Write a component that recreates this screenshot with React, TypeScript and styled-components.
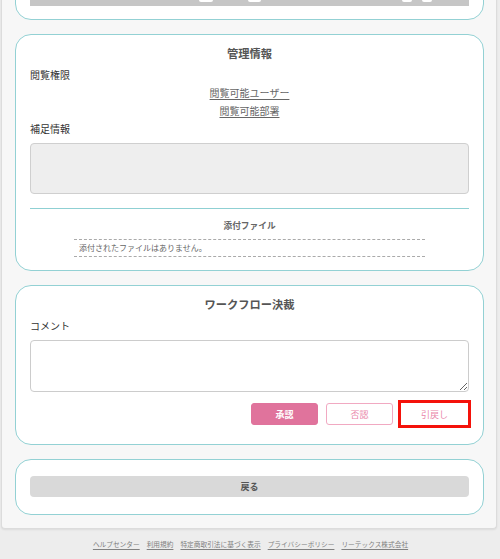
import styled, { createGlobalStyle } from "styled-components";

const GlobalStyle = createGlobalStyle`
  html, body {
    margin: 0;
    padding: 0;
    background: #ededed;
  }
  body {
    font-family: "Noto Sans CJK JP", "Noto Sans", sans-serif;
    color: #333;
  }
`;

const Page = styled.div`
  width: 500px;
  height: 559px;
  overflow: hidden;
`;

const Container = styled.div`
  margin: -39px 3px 0 1px;
  padding: 0 12px 13px 13px;
  background: #f7f7f7;
  border: 1px solid #dcdcdc;
  border-top: none;
  border-radius: 0 0 4px 4px;
  box-shadow: 0 1px 2px rgba(0, 0, 0, 0.08);
  display: flex;
  flex-direction: column;
  gap: 14px;
`;

const Card = styled.section`
  background: #fff;
  border: 1px solid #93d1d4;
  border-radius: 16px;
  padding: 8px 14px 13px;
  display: flex;
  flex-direction: column;
`;

const ToolBar = styled.div`
  box-sizing: border-box;
  height: 30px;
  margin-top: 6px;
  background: #c6c6c6;
  display: flex;
  align-items: flex-end;
  padding: 0 37px 4px 169px;
`;

const ToolKnob = styled.span<{ $w: number; $ml?: number }>`
  width: ${(p) => p.$w}px;
  height: 12px;
  margin-left: ${(p) => p.$ml ?? 0}px;
  background: #fff;
  border-radius: 2px;
`;

const Spacer = styled.span`
  flex: 1;
`;

const Title = styled.h2`
  margin: 0;
  font-size: 11.25px;
  line-height: 20px;
  font-weight: 700;
  color: #555;
  text-align: center;
`;

const Label = styled.div<{ $mt?: number }>`
  margin-top: ${(p) => p.$mt ?? 0}px;
  font-size: 10px;
  line-height: 18px;
  color: #333;
`;

const LinkLine = styled.a<{ $lh?: number }>`
  align-self: center;
  font-size: 10px;
  line-height: ${(p) => p.$lh ?? 18}px;
  color: #666;
  text-decoration: underline;
  text-underline-offset: 2px;
  cursor: pointer;
`;

const TextBox = styled.textarea<{ $readonly?: boolean }>`
  display: block;
  box-sizing: border-box;
  width: 100%;
  height: ${(p) => (p.$readonly ? 51 : 52)}px;
  margin: 5px 0 0;
  border: 1px solid ${(p) => (p.$readonly ? "#cfcfcf" : "#cccccc")};
  border-radius: 4px;
  background: ${(p) => (p.$readonly ? "#eeeeee" : "#ffffff")};
  resize: ${(p) => (p.$readonly ? "none" : "vertical")};
  font-family: inherit;
  font-size: 10px;
  outline: none;
`;

const Divider = styled.div`
  margin-top: 14px;
  height: 1px;
  background: #8fd0d3;
`;

const SubTitle = styled.h3`
  margin: 9px 0 0;
  font-size: 8.7px;
  line-height: 16px;
  font-weight: 700;
  color: #666;
  text-align: center;
`;

const FileList = styled.div`
  align-self: center;
  width: 80%;
  margin-top: 5px;
  border-top: 1px dashed #aaa;
  border-bottom: 1px dashed #aaa;
  padding: 0 5px;
  box-sizing: border-box;
  font-size: 8px;
  line-height: 16px;
  color: #666;
`;

const ButtonRow = styled.div`
  display: flex;
  justify-content: flex-end;
  gap: 8px;
  margin: 11px 1px 6px 0;
`;

const ActionButton = styled.button<{ $variant: "fill" | "line"; $marked?: boolean }>`
  width: 67px;
  height: 22px;
  box-sizing: border-box;
  border-radius: ${(p) => (p.$marked ? 0 : 3)}px;
  font-family: inherit;
  font-size: 9px;
  font-weight: ${(p) => (p.$variant === "fill" ? 700 : 400)};
  color: ${(p) => (p.$variant === "fill" ? "#fff" : "#ea86aa")};
  background: ${(p) => (p.$variant === "fill" ? "#e0739c" : "#fff")};
  border: 1px solid ${(p) => (p.$variant === "fill" ? "#e0739c" : "#f1a9c2")};
  border-color: ${(p) => (p.$marked ? "#fff" : undefined)};
  outline: ${(p) => (p.$marked ? "3px solid #f4120a" : "none")};
  outline-offset: 0;
  cursor: pointer;
`;

const BackButton = styled.button`
  display: block;
  width: 100%;
  height: 21px;
  margin: 8px 0 4px;
  border: none;
  border-radius: 4px;
  background: #d9d9d9;
  font-family: inherit;
  font-size: 9px;
  font-weight: 700;
  color: #555;
  cursor: pointer;
`;

const Footer = styled.footer`
  margin-top: 9px;
  display: flex;
  justify-content: center;
  gap: 7px;
  padding-left: 1px;
`;

const FooterLink = styled.a`
  font-size: 6.7px;
  line-height: 12px;
  color: #808080;
  text-decoration: underline;
  text-underline-offset: 1.5px;
  white-space: nowrap;
`;

const FOOTER_LINKS = [
  "ヘルプセンター",
  "利用規約",
  "特定商取引法に基づく表示",
  "プライバシーポリシー",
  "リーテックス株式会社",
];

export default function App() {
  return (
    <Page>
      <GlobalStyle />
      <Container>
        <Card>
          <ToolBar>
            <ToolKnob $w={14} />
            <ToolKnob $w={13} $ml={35} />
            <Spacer />
            <ToolKnob $w={10} />
            <ToolKnob $w={10} $ml={10} />
          </ToolBar>
        </Card>

        <Card>
          <Title>管理情報</Title>
          <Label $mt={3}>閲覧権限</Label>
          <LinkLine>閲覧可能ユーザー</LinkLine>
          <LinkLine $lh={17}>閲覧可能部署</LinkLine>
          <Label $mt={1}>補足情報</Label>
          <TextBox $readonly readOnly />
          <Divider />
          <SubTitle>添付ファイル</SubTitle>
          <FileList>添付されたファイルはありません。</FileList>
        </Card>

        <Card>
          <Title>ワークフロー決裁</Title>
          <Label $mt={3}>コメント</Label>
          <TextBox />
          <ButtonRow>
            <ActionButton $variant="fill">承認</ActionButton>
            <ActionButton $variant="line">否認</ActionButton>
            <ActionButton $variant="line" $marked>
              引戻し
            </ActionButton>
          </ButtonRow>
        </Card>

        <Card>
          <BackButton>戻る</BackButton>
        </Card>
      </Container>

      <Footer>
        {FOOTER_LINKS.map((label) => (
          <FooterLink key={label}>{label}</FooterLink>
        ))}
      </Footer>
    </Page>
  );
}
